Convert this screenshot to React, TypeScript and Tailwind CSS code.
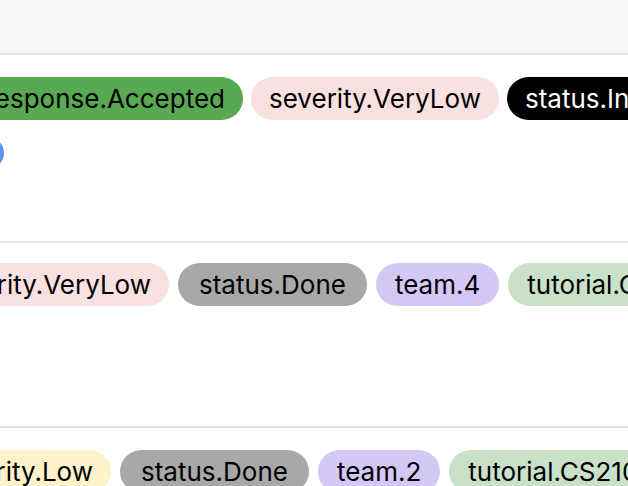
import React from "react";

type PillProps = { text: string; cls: string };

function Pill({ text, cls }: PillProps) {
  return (
    <span
      className={`shrink-0 h-[43px] flex items-center rounded-full text-[26px] leading-none whitespace-nowrap ${cls}`}
    >
      {text}
    </span>
  );
}

function Lead({ width, children }: { width: string; children: React.ReactNode }) {
  return <div className={`shrink-0 flex justify-end ${width}`}>{children}</div>;
}

export default function App() {
  return (
    <div
      className="w-[628px] h-[486px] overflow-hidden bg-white text-black"
      style={{ fontFamily: "Inter, 'Noto Sans', sans-serif" }}
    >
      <div className="h-[55px] bg-[#f6f7f9] border-b-2 border-[#e0e3e7]" />

      <div className="h-[188px] pt-[22px] border-b-2 border-[#e0e3e7]">
        <div className="flex gap-[8px]">
          <Lead width="w-[243px]">
            <Pill text="response.Accepted" cls="px-[18px] bg-[#58a952] text-black" />
          </Lead>
          <Pill text="severity.VeryLow" cls="px-[18px] bg-[#f9e0e1] text-black" />
          <Pill text="status.InProgress" cls="px-[18px] bg-black text-white" />
        </div>
        <div className="mt-[17px] flex">
          <div className="shrink-0 w-[32px] h-[32px] rounded-full bg-[#5b94f3] ml-[-28px]" />
        </div>
      </div>

      <div className="h-[185px] pt-[20px] border-b-2 border-[#e0e3e7]">
        <div className="flex gap-[9px]">
          <Lead width="w-[169px]">
            <Pill text="severity.VeryLow" cls="px-[18px] bg-[#f9e0e1] text-black" />
          </Lead>
          <Pill text="status.Done" cls="px-[21px] bg-[#a8a8a8] text-black" />
          <Pill text="team.4" cls="px-[19px] bg-[#d4c8f6] text-black" />
          <Pill text="tutorial.CS2103" cls="px-[19px] bg-[#c9e1c9] text-black" />
        </div>
      </div>

      <div className="pt-[22px]">
        <div className="flex gap-[9px]">
          <Lead width="w-[111px]">
            <Pill text="severity.Low" cls="px-[18px] bg-[#fdf2c9] text-black" />
          </Lead>
          <Pill text="status.Done" cls="px-[21px] bg-[#a8a8a8] text-black" />
          <Pill text="team.2" cls="px-[19px] bg-[#d4c8f6] text-black" />
          <Pill text="tutorial.CS2103" cls="px-[19px] bg-[#c9e1c9] text-black" />
        </div>
      </div>
    </div>
  );
}
